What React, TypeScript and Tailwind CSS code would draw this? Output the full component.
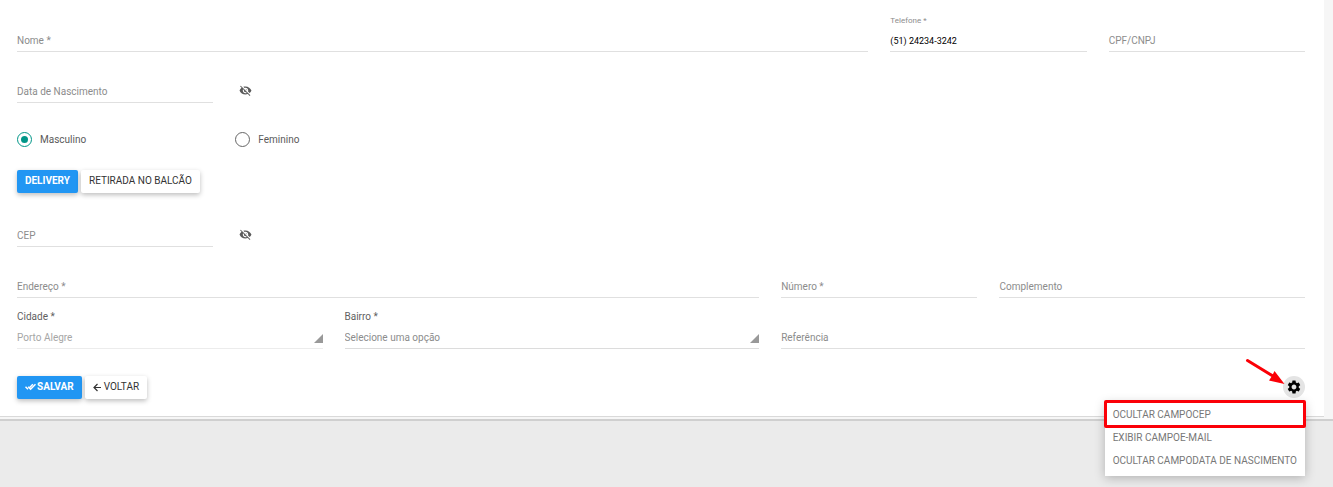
import { ReactNode, useState } from 'react';
import { MdSettings, MdVisibilityOff } from 'react-icons/md';

const MENU_ITEMS = [
  { id: 'cep', text: 'OCULTAR CAMPOCEP', highlighted: true },
  { id: 'email', text: 'EXIBIR CAMPOE-MAIL', highlighted: false },
  { id: 'birth', text: 'OCULTAR CAMPODATA DE NASCIMENTO', highlighted: false },
];

function CheckAllIcon() {
  return (
    <svg
      viewBox="0 0 11 11"
      className="size-[11px]"
      fill="none"
      stroke="currentColor"
      strokeWidth="1.5"
    >
      <path d="M.5 5.800 3 8.200M3.200 5.800 5.600 8.200 10.500 3.300M4.500 6.700 7.900 3.300" />
    </svg>
  );
}

function ArrowLeftIcon() {
  return (
    <svg
      viewBox="0 0 10 10"
      className="size-2.5"
      fill="none"
      stroke="currentColor"
      strokeWidth="1.2"
    >
      <path d="M8 5.500H1.500M4.500 2 1 5.500 4.500 9" />
    </svg>
  );
}

interface FieldProps {
  id: string;
  label: string;
  className: string;
  defaultValue?: string;
}

function Field({ id, label, className, defaultValue }: FieldProps) {
  return (
    <div className={`relative pt-4 ${className}`}>
      <input
        id={id}
        type="text"
        placeholder=" "
        defaultValue={defaultValue}
        className="peer block h-[21px] w-full border-b border-[#e0e0e0] text-[9px] text-black outline-none"
      />
      <label
        htmlFor={id}
        className="absolute left-0 top-0 text-[8px] leading-3 text-[#8c8c8c] peer-placeholder-shown:top-5 peer-placeholder-shown:text-[10px]"
      >
        {label}
      </label>
    </div>
  );
}

interface SelectFieldProps {
  id: string;
  label: string;
  option: string;
  className: string;
  disabled?: boolean;
}

function SelectField({
  id,
  label,
  option,
  className,
  disabled,
}: SelectFieldProps) {
  return (
    <div className={`relative ${className}`}>
      <label htmlFor={id} className="block leading-3 text-[#5f5f5f]">
        {label}
      </label>
      <select
        id={id}
        disabled={disabled}
        className="mt-1 block h-[22px] w-full appearance-none border-b border-[#dcdcdc] text-[#8c8c8c] outline-none disabled:border-[#ececec] disabled:text-[#a6a6a6] disabled:opacity-100"
      >
        <option>{option}</option>
      </select>
      <svg
        viewBox="0 0 9 9"
        className="pointer-events-none absolute bottom-1.5 right-0 size-[9px]"
      >
        <path d="M9 0v9H0z" fill="#999" />
      </svg>
    </div>
  );
}

function HideButton({ label }: { label: string }) {
  return (
    <button
      type="button"
      aria-label={label}
      className="col-span-1 mb-1.5 ml-1 self-end justify-self-start text-[#5a5a5a]"
    >
      <MdVisibilityOff size={13} />
    </button>
  );
}

interface RadioProps {
  label: string;
  checked: boolean;
  onChange: () => void;
}

function Radio({ label, checked, onChange }: RadioProps) {
  return (
    <label className="col-span-2 flex items-center gap-2 leading-[15px] text-[#5a5a5a]">
      <input
        type="radio"
        name="genero"
        checked={checked}
        onChange={onChange}
        className="size-[15px] appearance-none rounded-full border border-[#666] bg-white bg-clip-content p-[3px] checked:border-[#009688] checked:bg-[#009688]"
      />
      {label}
    </label>
  );
}

interface ButtonProps {
  children: ReactNode;
  primary?: boolean;
}

function Button({ children, primary }: ButtonProps) {
  return (
    <button
      type="button"
      className={`flex h-[23px] items-center gap-px rounded-xs px-2 pb-0.5 shadow-[0_2px_5px_rgba(0,0,0,0.26)] ${
        primary ? 'bg-[#2196f3] font-bold text-white' : 'bg-white text-[#333]'
      }`}
    >
      {children}
    </button>
  );
}

function FieldsMenu() {
  return (
    <ul className="absolute right-0 top-full z-10 mt-1 whitespace-nowrap bg-white pb-1 pt-px text-[#777] shadow-[0_2px_10px_rgba(0,0,0,0.25)]">
      {MENU_ITEMS.map(({ id, text, highlighted }) => (
        <li key={id} className="relative">
          <button type="button" className="block h-[23px] w-full px-2 text-left">
            {text}
          </button>
          {highlighted && (
            <span className="pointer-events-none absolute -inset-x-px -bottom-0.5 -top-[3px] rounded-xs border-[3px] border-[#fb0007]" />
          )}
        </li>
      ))}
    </ul>
  );
}

function Settings() {
  const [open, setOpen] = useState(true);

  return (
    <div className="relative">
      <button
        type="button"
        aria-label="Configurar campos"
        onClick={() => setOpen(!open)}
        className="flex size-[22px] items-center justify-center rounded-full bg-[#e4e4e4] text-black"
      >
        <MdSettings size={16} />
      </button>
      <svg
        viewBox="0 0 40 27"
        className="pointer-events-none absolute -top-[18px] right-5 h-[27px] w-10"
      >
        <path
          d="M2.500 2.500 28 18"
          stroke="#fb0007"
          strokeWidth="3"
          strokeLinecap="round"
        />
        <path d="M29.500 13 39.500 26 24 22.500 27 18z" fill="#fb0007" />
      </svg>
      {open && <FieldsMenu />}
    </div>
  );
}

export default function App() {
  const [gender, setGender] = useState('Masculino');

  return (
    <main className="min-h-screen bg-[#ebebeb] font-['Roboto','Liberation_Sans',sans-serif] text-[10px]">
      <div className="border-b-2 border-[#cfcfcf] bg-[#f6f6f6] pb-0.5 pr-[9px]">
        <form className="border-b border-[#d9d9d9] bg-white pb-[17px] pl-[17px] pr-[19px] pt-[15px]">
          <div className="grid grid-cols-12 gap-x-[22px] gap-y-3.5">
            <Field id="nome" label="Nome *" className="col-span-8" />
            <Field
              id="telefone"
              label="Telefone *"
              defaultValue="(51) 24234-3242"
              className="col-span-2"
            />
            <Field id="cpf" label="CPF/CNPJ" className="col-span-2" />

            <Field
              id="nascimento"
              label="Data de Nascimento"
              className="col-span-2"
            />
            <HideButton label="Ocultar data de nascimento" />
          </div>

          <div className="mt-[29px] grid grid-cols-12 gap-x-[22px]">
            {['Masculino', 'Feminino'].map((name) => (
              <Radio
                key={name}
                label={name}
                checked={gender === name}
                onChange={() => setGender(name)}
              />
            ))}
          </div>

          <div className="mt-[23px] flex gap-[3px]">
            <Button primary>DELIVERY</Button>
            <Button>RETIRADA NO BALCÃO</Button>
          </div>

          <div className="mt-[17px] grid grid-cols-12 gap-x-[22px] gap-y-3.5">
            <Field id="cep" label="CEP" className="col-span-2" />
            <HideButton label="Ocultar CEP" />

            <Field
              id="endereco"
              label="Endereço *"
              className="col-span-7 col-start-1"
            />
            <Field id="numero" label="Número *" className="col-span-2" />
            <Field
              id="complemento"
              label="Complemento"
              className="col-span-3"
            />
          </div>

          <div className="mt-[13px] grid grid-cols-12 items-end gap-x-[22px]">
            <SelectField
              id="cidade"
              label="Cidade *"
              option="Porto Alegre"
              className="col-span-3"
              disabled
            />
            <SelectField
              id="bairro"
              label="Bairro *"
              option="Selecione uma opção"
              className="col-span-4"
            />
            <Field id="referencia" label="Referência" className="col-span-5" />
          </div>

          <div className="mt-[27px] flex gap-[3px]">
            <Button primary>
              <CheckAllIcon />
              SALVAR
            </Button>
            <Button>
              <ArrowLeftIcon />
              VOLTAR
            </Button>
            <div className="ml-auto">
              <Settings />
            </div>
          </div>
        </form>
      </div>
    </main>
  );
}
